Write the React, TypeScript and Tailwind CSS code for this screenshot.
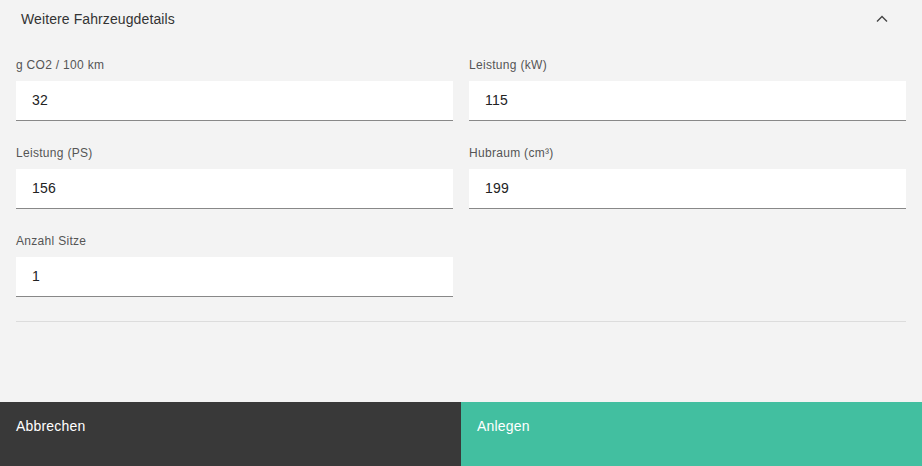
const fields = [
  { label: "g CO2 / 100 km", value: "32" },
  { label: "Leistung (kW)", value: "115" },
  { label: "Leistung (PS)", value: "156" },
  { label: "Hubraum (cm³)", value: "199" },
  { label: "Anzahl Sitze", value: "1" },
];

export default function App() {
  return (
    <div className="w-[922px] h-[466px] bg-[#f3f3f3] flex flex-col font-['Liberation_Sans',Arial,sans-serif] overflow-hidden">
      <div className="h-[38px] flex items-center justify-between pl-[21px] pr-[34px]">
        <span className="text-[14px] text-[#333] tracking-[0.1px]">Weitere Fahrzeugdetails</span>
        <svg width="12" height="8" viewBox="0 0 12 8" fill="none">
          <path d="M1 6.5L6 1.5L11 6.5" stroke="#444" strokeWidth="1.4" />
        </svg>
      </div>

      <div className="px-4 pt-[19px]">
        <div className="grid grid-cols-2 gap-x-4 gap-y-6">
          {fields.map((f) => (
            <div key={f.label} className="flex flex-col">
              <label className="h-4 leading-4 text-[12px] tracking-[0.3px] text-[#555] mb-2">{f.label}</label>
              <div className="h-10 bg-white border-b border-[#888] flex items-center px-4 text-[14px] tracking-[0.2px] text-[#222]">
                {f.value}
              </div>
            </div>
          ))}
        </div>
        <div className="mt-6 border-t border-[#dcdcdc]" />
      </div>

      <div className="mt-auto h-16 flex">
        <button className="w-1/2 bg-[#393939] text-white text-[14px] tracking-[0.2px] text-left px-4 pb-4">Abbrechen</button>
        <button className="w-1/2 bg-[#42bfa0] text-white text-[14px] tracking-[0.2px] text-left px-4 pb-4">Anlegen</button>
      </div>
    </div>
  );
}
